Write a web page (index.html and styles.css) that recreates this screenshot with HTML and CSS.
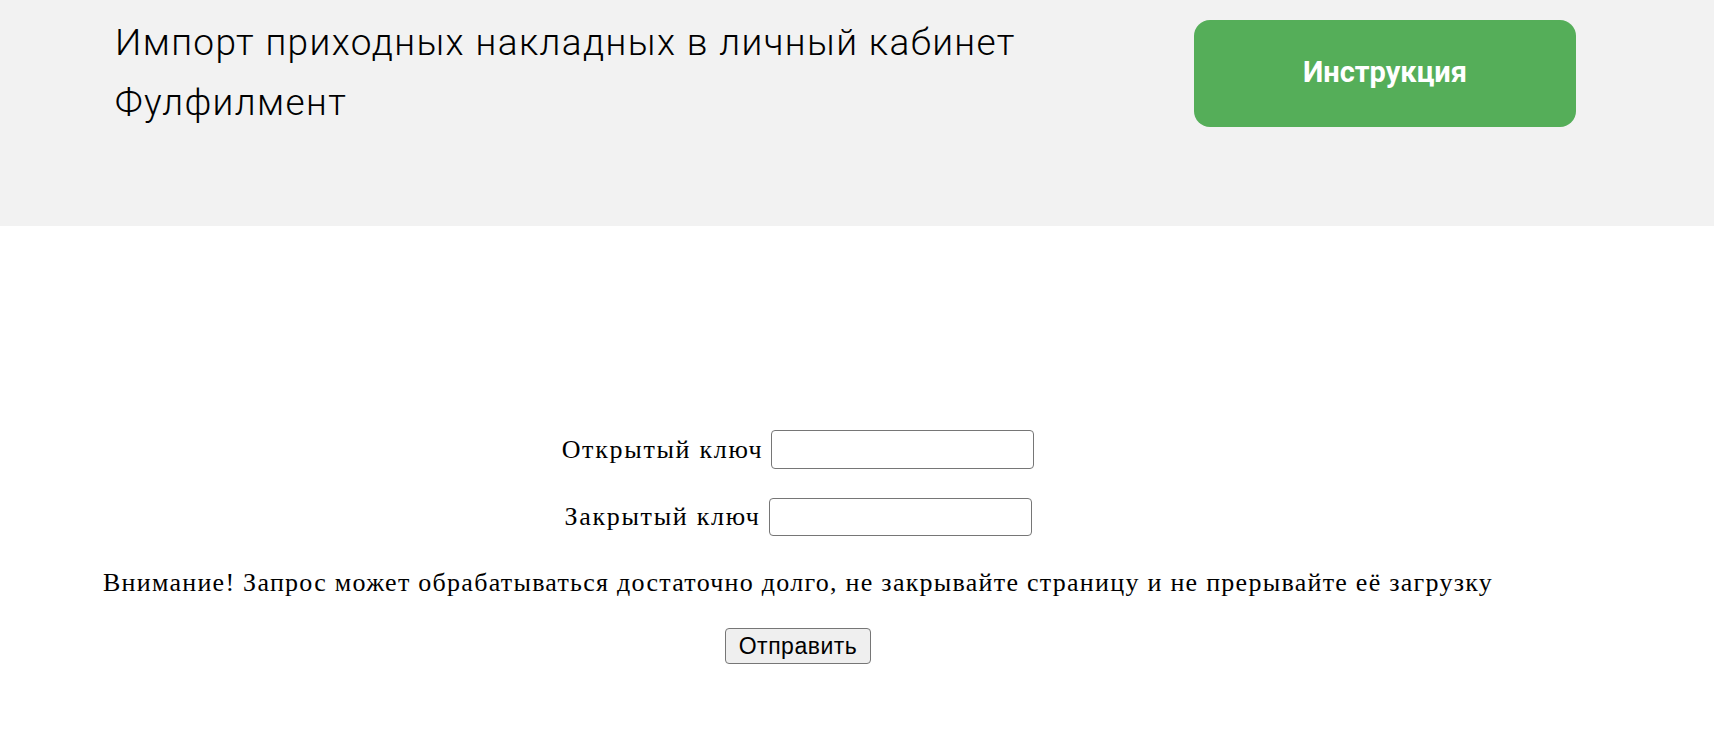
FILE: index.html
```html
<!DOCTYPE html>
<html lang="ru">
<head>
<meta charset="utf-8">
<title>Импорт приходных накладных</title>
<link rel="stylesheet" href="styles.css">
</head>
<body>
<header class="header">
  <h1 class="title">Импорт приходных накладных в личный кабинет Фулфилмент</h1>
  <a class="guide-btn" href="#">Инструкция</a>
</header>
<form class="form">
  <div class="row row-first">
    <label class="label" for="pub">Открытый ключ</label>
    <input class="field" id="pub" type="text">
  </div>
  <div class="row row-second">
    <label class="label" for="priv">Закрытый ключ</label>
    <input class="field" id="priv" type="text">
  </div>
  <p class="warning">Внимание! Запрос может обрабатываться достаточно долго, не закрывайте страницу и не прерывайте её загрузку</p>
  <button class="submit" type="button">Отправить</button>
</form>
</body>
</html>
```

FILE: styles.css
```css
html, body {
  margin: 0;
  padding: 0;
  background: #ffffff;
}

.header {
  box-sizing: border-box;
  height: 226px;
  background: #f2f2f2;
  display: flex;
  justify-content: space-between;
  align-items: flex-start;
  padding: 13px 138px 0 115px;
}

.title {
  margin: 0;
  width: 1000px;
  font-family: Roboto, "Liberation Sans", sans-serif;
  font-weight: 300;
  font-size: 37px;
  letter-spacing: 1.4px;
  line-height: 60px;
  color: #000;
}

.guide-btn {
  margin-top: 7px;
  box-sizing: border-box;
  width: 382px;
  height: 107px;
  flex: none;
  padding-bottom: 4px;
  border-radius: 16px;
  background: #55ae59;
  color: #ffffff;
  text-decoration: none;
  font-family: Roboto, "Liberation Sans", sans-serif;
  font-weight: 700;
  font-size: 29px;
  display: flex;
  align-items: center;
  justify-content: center;
}

.form {
  width: 1596px;
  display: flex;
  flex-direction: column;
  align-items: center;
  padding-top: 204px;
  font-family: "Liberation Serif", "Times New Roman", serif;
  font-size: 26px;
  color: #000;
}

.row {
  display: flex;
  align-items: center;
  gap: 8px;
  height: 39px;
}

.row-second {
  margin-top: 29px;
  height: 38px;
}

.label {
  line-height: 28px;
  letter-spacing: 1.7px;
}

.field {
  box-sizing: border-box;
  width: 263px;
  height: 100%;
  margin: 0;
  padding: 0 6px;
  border: 1.5px solid #767676;
  border-radius: 4px;
  background: #ffffff;
  font-size: 20px;
}

.warning {
  margin: 33px 0 0;
  line-height: 28px;
  letter-spacing: 1.27px;
}

.submit {
  margin-top: 31px;
  box-sizing: border-box;
  width: 146px;
  height: 36px;
  padding: 0;
  border: 1.5px solid #767676;
  border-radius: 4px;
  background: #efefef;
  font-family: "Liberation Sans", Arial, sans-serif;
  font-size: 23px;
  letter-spacing: 0.5px;
  color: #000;
}
```
